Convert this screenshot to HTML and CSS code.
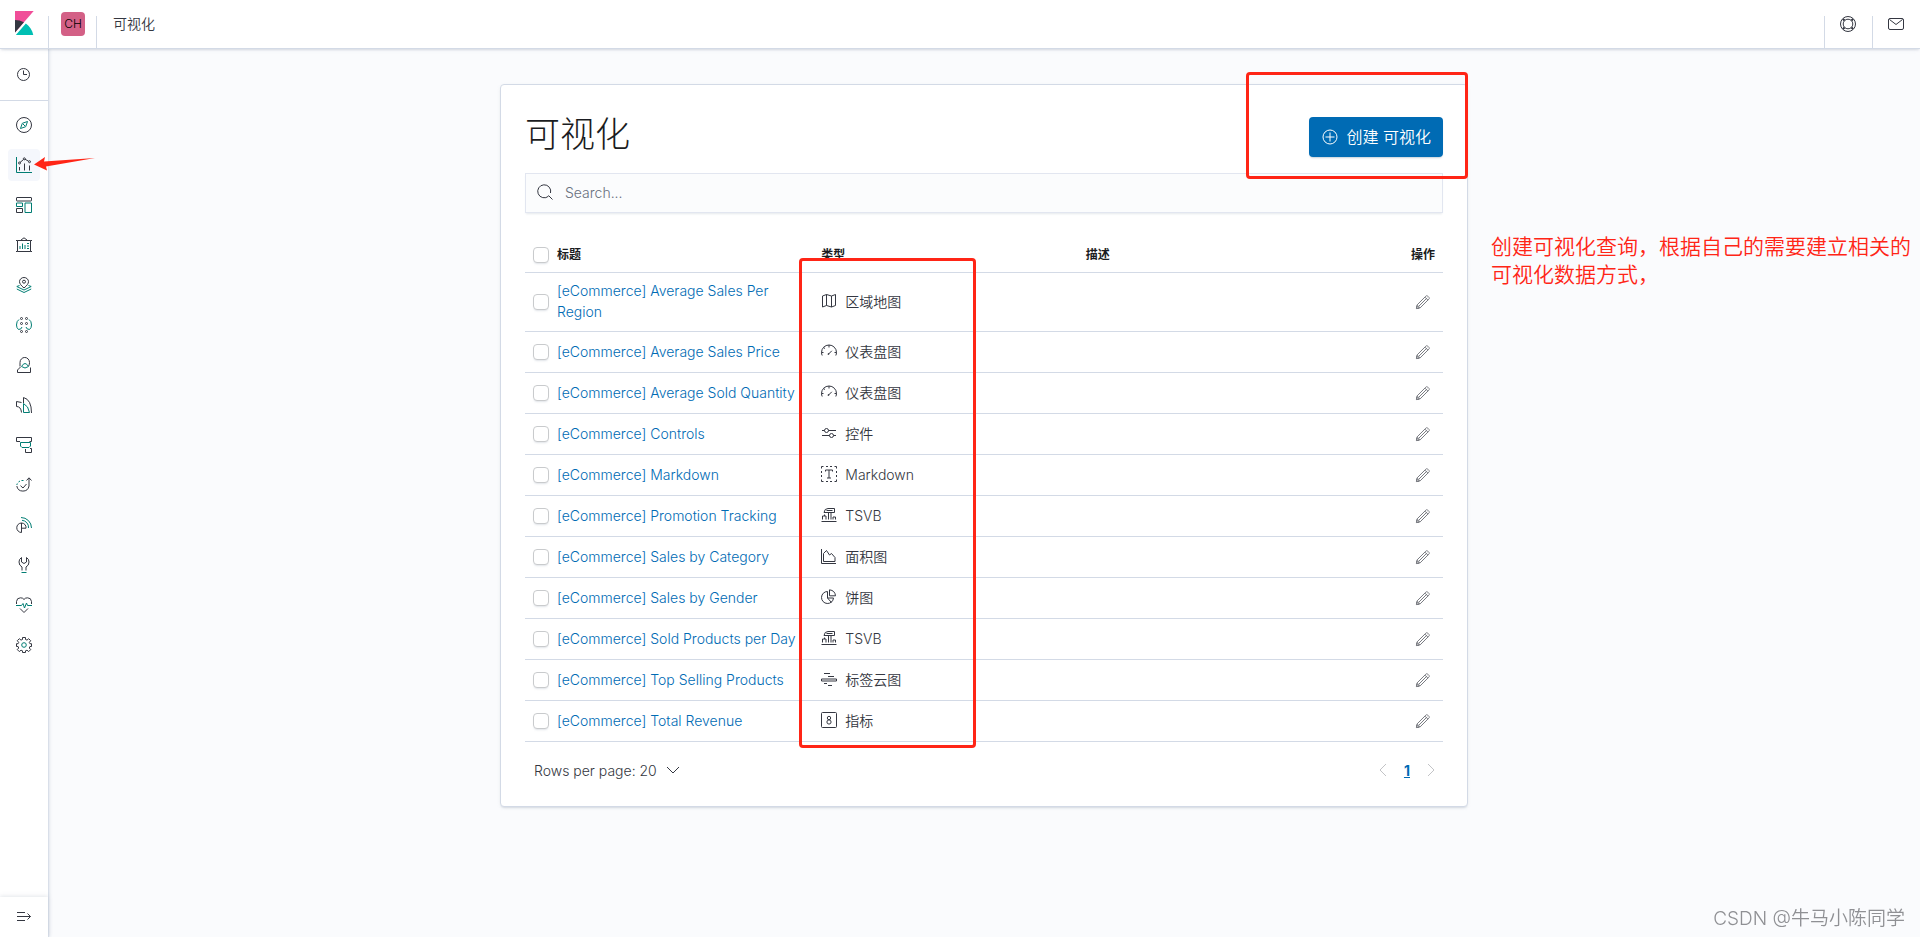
FILE: index.html
```html
<!DOCTYPE html>
<html lang="zh-CN">
<head>
<meta charset="utf-8">
<title>可视化 - Kibana</title>
<link rel="stylesheet" href="styles.css">
</head>
<body>
<svg class="sprite" aria-hidden="true">
  <symbol id="pencil" viewBox="0 0 16 16"><path d="M1.500 14.500l.6-3.600 8.700-8.700c.7-.7 1.300-.7 2 0l1 1c.7.7.7 1.300 0 2l-8.700 8.700zM4 12l8.200-8.200M2.200 11l2.800 2.800M9.900 3.100l3 3"/><path d="M1.400 14.600l.3-2.600 2.300 2.300z"/></symbol>
  <symbol id="gauge" viewBox="0 0 16 16"><path d="M1.200 12.500Q.5 11 .5 9.500A7.500 7.500 0 0 1 15.500 9.500Q15.500 11 14.800 12.500M.5 9.500h2M13.500 9.500h2M8 2v2.500M2.800 4.500l1.200 1.200M7.300 11.300l3.500-3.500"/><circle cx="7.500" cy="11" r=".5"/></symbol>
  <symbol id="tsvb" viewBox="0 0 16 16"><path d="M.5 14.500h15M1.500 12.500v-3.500h3.500v3.500M3.500 9V7.500M7.500 12.500V5.500M10 12.500V5.500M12 12.500v-2.500h2.500v2.500M3 5.500Q3.500 1.500 7 1.500h6.500v4zM5.500 3.500h6"/></symbol>
</svg>

<header class="topbar">
  <a class="logo" href="#" aria-label="Kibana"><svg width="24" height="24" viewBox="0 0 32 32"><path fill="#F04E98" d="M4 0v28.789L28.935.017z"/><path fill="#343741" d="M4 12v16.789l11.906-13.738A24.721 24.721 0 0 0 4 12"/><path fill="#00BFB3" d="M18.479 16.664L6.268 30.754l-1.073 1.237h23.191c-1.252-6.292-4.883-11.719-9.908-15.327"/></svg></a>
  <button class="slot space" type="button"><span class="avatar">CH</span></button>
  <nav class="crumbs" aria-label="breadcrumbs">可视化</nav>
  <button class="slot" type="button" aria-label="帮助"><svg class="ico" viewBox="0 0 16 16"><circle cx="8" cy="8" r="7.500"/><circle cx="8" cy="8" r="4.800"/><path stroke-width="2" d="M3 3l1.500 1.500M13 3l-1.500 1.500M3 13l1.500-1.500M13 13l-1.500-1.500"/></svg></button>
  <button class="slot" type="button" aria-label="邮件"><svg class="ico" viewBox="0 0 16 16"><rect x=".5" y="2.500" width="15" height="11" rx="1.500"/><path d="M1.500 3.500L8 8.500l6.500-5"/></svg></button>
</header>

<div class="shell">
  <nav class="side" aria-label="主导航">
    <div class="recent"><a href="#" aria-label="最近"><svg class="ico" viewBox="0 0 16 16"><circle cx="7.500" cy="8.500" r="6"/><path d="M7.500 4.500v4h3.500"/></svg></a></div>
    <div class="apps">
      <a href="#" aria-label="Discover"><svg class="ico" viewBox="0 0 16 16"><circle cx="8" cy="8" r="7.500"/><path class="teal" d="M11.500 4.500L9.700 9.700 4.500 11.500l1.800-5.200zM7 7l2 2"/></svg></a>
      <a href="#" class="active" aria-label="可视化"><svg class="ico" viewBox="0 0 16 16"><path class="teal" d="M.5 0v15.500H16"/><path d="M3.500 10v3.500M8.500 6.500v7M13.500 8.500v5M4 5.500l3.500-3M9 2.200l3.500 2"/><circle cx="3.500" cy="6" r="1"/><circle cx="8.300" cy="1.800" r="1"/><circle cx="13.500" cy="4.700" r="1"/></svg></a>
      <a href="#" aria-label="仪表板"><svg class="ico" viewBox="0 0 16 16"><rect x=".5" y=".5" width="15" height="3.500" rx=".5"/><path class="teal" d="M.5 6h6v3.500h-6zM9 6h6.500v9.500H9z"/><path d="M.5 11.500h6v4h-6z"/></svg></a>
      <a href="#" aria-label="Canvas"><svg class="ico" viewBox="0 0 16 16"><path d="M1.500 3.500h13v11h-13zM5 3L8 .8 11 3M0 3.500h1.500M14.500 3.500H16M0 14.500h1.500M14.500 14.500H16"/><path class="teal" d="M4 9v3M6.500 6.500V12M9 8v4M11 6.500h2M11 9h2M11 11.500h2"/></svg></a>
      <a href="#" aria-label="Maps"><svg class="ico" viewBox="0 0 16 16"><path d="M8 11C5 8.500 3.500 6.500 3.500 4.700a4.500 4.200 0 0 1 9 0C12.500 6.500 11 8.500 8 11z"/><circle cx="8" cy="4.700" r="1.500"/><path class="teal" d="M3.500 8.500L.8 9.500 8 13l7.200-3.500-2.700-1M.8 12L8 15.500l7.200-3.500"/></svg></a>
      <a href="#" aria-label="Machine Learning"><svg class="ico" viewBox="0 0 16 16"><circle cx="5.500" cy="1.500" r="1"/><circle cx="10.500" cy="1.500" r="1"/><circle cx="5.500" cy="6.500" r="1"/><circle cx="10.500" cy="6.500" r="1"/><circle cx="5.500" cy="14.500" r="1"/><circle cx="10.500" cy="14.500" r="1"/><path class="teal" d="M3 2.500Q.5 4 .5 8q0 3 2 4.500 3 0 3.500-2.500M13 2.500Q15.500 4 15.500 8q0 3-2 4.500-3 0-3.500-2.500"/></svg></a>
      <a href="#" aria-label="Metrics"><svg class="ico" viewBox="0 0 16 16"><path d="M4 9.500V5.500a4.700 5 0 0 1 9.500 0q0 2-.8 3.500M4.500 10L1.500 13v2.500h13V10.500"/><path class="teal" d="M5.500 9.500q3.500-6 7 0-3.500 3-7 0z"/></svg></a>
      <a href="#" aria-label="Logs"><svg class="ico" viewBox="0 0 16 16"><path d="M7.500 6V.500Q15.500 2.500 15.500 16M5.500 5.500L.5 4.500v5q4.500 0 5 6"/><path class="teal" d="M7.500 6.500v9h6Q12.500 9 7.500 6.500z"/></svg></a>
      <a href="#" aria-label="APM"><svg class="ico" viewBox="0 0 16 16"><path d="M4 4.500H.500v-4h15v4h-2M9.500 12v3.500h6V11.500H14"/><path class="teal" d="M4.500 5.500h10v3.500l-1.500 1.500H6L4.500 9z"/></svg></a>
      <a href="#" aria-label="Uptime"><svg class="ico" viewBox="0 0 16 16"><path d="M.8 9a6.200 6.200 0 0 0 12.200 0V1M10.500 3.500L13 .8 15.500 3.500M4.500 8.700L7 11l3.500-4"/><path class="teal" d="M.8 8l.5-1.500M2.500 5L4 4M5.500 3.500H7.500"/></svg></a>
      <a href="#" aria-label="SIEM"><svg class="ico" viewBox="0 0 16 16"><path d="M5.500 6v9.500A4.700 4.700 0 1 1 5.500 6a4.500 4.500 0 0 1 4.500 5.200H5.500"/><path class="teal" d="M5 .5a10.500 10.500 0 0 1 10.500 10.500M6 3.300A7 7 0 0 1 12.500 11"/></svg></a>
      <a href="#" aria-label="Dev Tools"><svg class="ico" viewBox="0 0 16 16"><path d="M6 13.500V10Q3 8.500 3 5q0-3 2.500-4.500V5L8 6.500 10.500 5V.500Q13 2 13 5q0 3.500-3 5v3.500"/><path class="teal" d="M5.500 15.500h5"/></svg></a>
      <a href="#" aria-label="监测"><svg class="ico" viewBox="0 0 16 16"><path d="M.5 7V4.500Q.8.800 4.500.800 7 .800 8 2.500 9 .800 11.500.800q3.700 0 4 3.700V7M4 11.500l4 4 4-4"/><path class="teal" d="M0 8.500h5.500L7 6.500 8.500 11l2-5 1 2.500H16"/></svg></a>
      <a href="#" aria-label="管理"><svg class="ico" viewBox="0 0 16 16"><path d="M6.500 2.500V.500h3v2l1.500.6 1.700-1.400 2 2-1.400 1.700.6 1.300h1.600v2.800h-1.600L13.300 11l1.400 1.600-2 2L11 13.200l-1.500.6v1.700h-3v-1.700L5 13.200l-1.700 1.400-2-2L2.700 11l-.6-1.500H.5V6.700h1.600l.6-1.300L1.300 3.700l2-2L5 3.100z"/><circle class="teal" cx="8" cy="8" r="2.300"/></svg></a>
    </div>
    <div class="expand"><button type="button" aria-label="展开"><svg class="ico" viewBox="0 0 16 16"><path d="M1 3.500h8M1 7.500h13.500M1 11.500h8M11.500 4.500l3 3-3 3"/></svg></button></div>
  </nav>

  <main class="main">
    <section class="panel">
      <div class="head">
        <h1>可视化</h1>
        <button class="create" type="button"><svg class="ico" viewBox="0 0 16 16"><circle cx="8" cy="8" r="7"/><path d="M8 3.500v9M3.500 8h9"/></svg>创建 可视化</button>
      </div>
      <label class="search"><svg class="ico" viewBox="0 0 16 16"><path d="M11.500 12.200A6.500 6.500 0 1 1 13.500 9M11.500 11.500l4 4"/></svg><input type="search" placeholder="Search..." aria-label="Search"></label>

      <table class="list">
        <colgroup><col class="c-check"><col><col><col><col class="c-act"></colgroup>
        <thead><tr><th><input type="checkbox" aria-label="全选"></th><th>标题</th><th>类型</th><th>描述</th><th class="act">操作</th></tr></thead>
        <tbody>
          <tr><td><input type="checkbox" aria-label="选择"></td><td><a href="#">[eCommerce] Average Sales Per Region</a></td><td><span class="type"><svg class="ico" viewBox="0 0 16 16"><path d="M1.500 3L5.500 1.500 10.500 3l4-1.500V12.500l-4 1.500-5-1.500-4 1.500zM5.500 1.500v11M10.500 3v11"/></svg>区域地图</span></td><td></td><td class="act"><button type="button" aria-label="编辑"><svg class="ico"><use href="#pencil"/></svg></button></td></tr>
          <tr><td><input type="checkbox" aria-label="选择"></td><td><a href="#">[eCommerce] Average Sales Price</a></td><td><span class="type"><svg class="ico"><use href="#gauge"/></svg>仪表盘图</span></td><td></td><td class="act"><button type="button" aria-label="编辑"><svg class="ico"><use href="#pencil"/></svg></button></td></tr>
          <tr><td><input type="checkbox" aria-label="选择"></td><td><a href="#">[eCommerce] Average Sold Quantity</a></td><td><span class="type"><svg class="ico"><use href="#gauge"/></svg>仪表盘图</span></td><td></td><td class="act"><button type="button" aria-label="编辑"><svg class="ico"><use href="#pencil"/></svg></button></td></tr>
          <tr><td><input type="checkbox" aria-label="选择"></td><td><a href="#">[eCommerce] Controls</a></td><td><span class="type"><svg class="ico" viewBox="0 0 16 16"><path d="M1 5.500h2.500M7.500 5.500H15M1 10.500h7.500M12.500 10.500H15"/><circle cx="5.500" cy="5.500" r="2"/><circle cx="10.500" cy="10.500" r="2"/></svg>控件</span></td><td></td><td class="act"><button type="button" aria-label="编辑"><svg class="ico"><use href="#pencil"/></svg></button></td></tr>
          <tr><td><input type="checkbox" aria-label="选择"></td><td><a href="#">[eCommerce] Markdown</a></td><td><span class="type"><svg class="ico" viewBox="0 0 16 16"><path d="M.5 2.500v-2h2M5 .5h2M9 .5h2M13.500.500h2v2M15.500 5v2M15.500 9v2M15.500 13.500v2h-2M11 15.500H9M7 15.500H5M2.500 15.500h-2v-2M.5 11V9M.5 7V5M4.500 5.500v-1.500h7v1.500M8 4v8M6 12h4"/></svg>Markdown</span></td><td></td><td class="act"><button type="button" aria-label="编辑"><svg class="ico"><use href="#pencil"/></svg></button></td></tr>
          <tr><td><input type="checkbox" aria-label="选择"></td><td><a href="#">[eCommerce] Promotion Tracking</a></td><td><span class="type"><svg class="ico"><use href="#tsvb"/></svg>TSVB</span></td><td></td><td class="act"><button type="button" aria-label="编辑"><svg class="ico"><use href="#pencil"/></svg></button></td></tr>
          <tr><td><input type="checkbox" aria-label="选择"></td><td><a href="#">[eCommerce] Sales by Category</a></td><td><span class="type"><svg class="ico" viewBox="0 0 16 16"><path d="M.5 1v14.500H15M2.500 13.500v-8l3-3 3 4.500 2-1.500 3.500 4v4z"/></svg>面积图</span></td><td></td><td class="act"><button type="button" aria-label="编辑"><svg class="ico"><use href="#pencil"/></svg></button></td></tr>
          <tr><td><input type="checkbox" aria-label="选择"></td><td><a href="#">[eCommerce] Sales by Gender</a></td><td><span class="type"><svg class="ico" viewBox="0 0 16 16"><path d="M6.500 2.500a6 6 0 1 0 6 6.500h-6zM6.500 9l4 4.500M8.500.8v6h6Q14 1.500 8.500.8z"/></svg>饼图</span></td><td></td><td class="act"><button type="button" aria-label="编辑"><svg class="ico"><use href="#pencil"/></svg></button></td></tr>
          <tr><td><input type="checkbox" aria-label="选择"></td><td><a href="#">[eCommerce] Sold Products per Day</a></td><td><span class="type"><svg class="ico"><use href="#tsvb"/></svg>TSVB</span></td><td></td><td class="act"><button type="button" aria-label="编辑"><svg class="ico"><use href="#pencil"/></svg></button></td></tr>
          <tr><td><input type="checkbox" aria-label="选择"></td><td><a href="#">[eCommerce] Top Selling Products</a></td><td><span class="type"><svg class="ico" viewBox="0 0 16 16"><path d="M3 2.500h6M7 5.500h6M.5 8h15v2H.500zM3 12.500h3M7 14.500h4"/></svg>标签云图</span></td><td></td><td class="act"><button type="button" aria-label="编辑"><svg class="ico"><use href="#pencil"/></svg></button></td></tr>
          <tr><td><input type="checkbox" aria-label="选择"></td><td><a href="#">[eCommerce] Total Revenue</a></td><td><span class="type"><svg class="ico" viewBox="0 0 16 16"><rect x=".5" y=".5" width="15" height="15" rx="1"/><circle cx="8" cy="6" r="1.700"/><circle cx="8" cy="10" r="2.100"/></svg>指标</span></td><td></td><td class="act"><button type="button" aria-label="编辑"><svg class="ico"><use href="#pencil"/></svg></button></td></tr>
        </tbody>
      </table>

      <div class="foot">
        <button class="rows" type="button">Rows per page: 20<svg class="ico" viewBox="0 0 16 16"><path d="M2 5l6 6 6-6"/></svg></button>
        <nav class="pager" aria-label="分页">
          <button type="button" disabled aria-label="上一页"><svg class="ico" viewBox="0 0 16 16"><path d="M11 2L5 8l6 6"/></svg></button>
          <a href="#" aria-current="page">1</a>
          <button type="button" disabled aria-label="下一页"><svg class="ico" viewBox="0 0 16 16"><path d="M5 2l6 6-6 6"/></svg></button>
        </nav>
      </div>
      <div class="mark mark-create"></div>
      <div class="mark mark-types"></div>
      <p class="note">创建可视化查询，根据自己的需要建立相关的可视化数据方式，</p>
    </section>
  </main>
</div>
<svg class="arrow" width="64" height="16" viewBox="0 0 64 16" aria-hidden="true"><path fill="#FF2516" d="M1 8.500L12 1l-1 4.500L62 2 13 10.500l1 4z"/></svg>
<div class="watermark">CSDN @牛马小陈同学</div>
</body>
</html>
```

FILE: styles.css
```css
* { box-sizing: border-box; }
body {
  margin: 0;
  min-height: 100vh;
  display: flex;
  flex-direction: column;
  background: #fafbfd;
  color: #343741;
  font: 14px/21px Inter, "Noto Sans CJK SC", sans-serif;
  font-weight: 350;
}
button {
  font: inherit;
  color: inherit;
  border: 0;
  padding: 0;
  background: none;
}
a { color: #006bb4; text-decoration: none; }
.sprite { display: none; }
.ico {
  width: 16px;
  height: 16px;
  flex: none;
  display: block;
  fill: none;
  stroke: #343741;
  stroke-width: 1;
}
.ico .teal { stroke: #017d73; }

.topbar {
  display: flex;
  height: 49px;
  background: #fff;
  border-bottom: 1px solid #d3dae6;
  box-shadow: 0 2px 2px -1px rgba(152, 162, 179, .3), 0 1px 5px -2px rgba(152, 162, 179, .3);
  z-index: 2;
  position: relative;
}
.logo { width: 48px; padding: 11px 12px; }
.logo svg { display: block; }
.slot {
  width: 48px;
  display: flex;
  justify-content: center;
  align-items: flex-start;
  padding-top: 16px;
  background: linear-gradient(#d3dae6, #d3dae6) 0 16px / 1px 100% no-repeat;
}
.slot.space { padding: 12px 0 0 2px; }
.avatar {
  width: 24px;
  height: 24px;
  border-radius: 4px;
  background: #d36086;
  color: #000;
  font-size: 12px;
  line-height: 24px;
}
.crumbs {
  flex: 1;
  padding: 13px 17px;
  background: linear-gradient(#d3dae6, #d3dae6) 0 16px / 1px 100% no-repeat;
}

.shell { flex: 1; display: flex; }
.side {
  width: 48px;
  background: #fff;
  display: flex;
  flex-direction: column;
  box-shadow: 1px 0 1px #d9dfe9, 2px 0 3px rgba(152, 162, 179, .2);
}
.recent { padding: 9px 8px 10px; border-bottom: 1px solid #d3dae6; }
.apps { flex: 1; display: flex; flex-direction: column; gap: 8px; padding: 8px; }
.recent a, .apps a, .expand button {
  width: 32px;
  height: 32px;
  display: flex;
  align-items: center;
  justify-content: center;
  border-radius: 4px;
}
.apps .active { background: #f5f7fc; }
.expand { padding: 4px 8px; box-shadow: 0 -1px 4px rgba(152, 162, 179, .25); }

.main { flex: 1; padding: 35px 16px; }
.panel {
  position: relative;
  max-width: 968px;
  margin: 0 auto;
  padding: 24px;
  background: #fff;
  border: 1px solid #d3dae6;
  border-radius: 4px;
  box-shadow: 0 2px 2px -1px rgba(152, 162, 179, .3), 0 1px 5px -2px rgba(152, 162, 179, .3);
}
.head {
  display: flex;
  align-items: center;
  justify-content: space-between;
  height: 56px;
  margin-bottom: 8px;
}
h1 {
  margin: 0;
  padding-bottom: 6px;
  color: #1a1c21;
  font-size: 35px;
  line-height: 40px;
  font-weight: 300;
}
.create {
  display: flex;
  align-items: center;
  gap: 8px;
  height: 40px;
  padding: 0 12px 0 13px;
  border-radius: 4px;
  background: #006bb4;
  color: #fff;
  font-size: 16px;
  box-shadow: 0 2px 2px -1px rgba(54, 97, 126, .3);
}
.create .ico { stroke: #fff; }
.search {
  display: flex;
  align-items: center;
  gap: 12px;
  height: 40px;
  padding: 0 11px 2px;
  background: #fbfcfd;
  border: 1px solid #e2e6f0;
  box-shadow: 0 2px 2px -1px rgba(152, 162, 179, .25);
}
.search input {
  flex: 1;
  border: 0;
  padding: 0;
  background: none;
  font: inherit;
  outline: 0;
}
.search input::placeholder { color: #69707d; }

.list {
  width: 100%;
  margin-top: 24px;
  table-layout: fixed;
  border-collapse: separate;
  border-spacing: 0;
}
.c-check { width: 24px; }
.c-act { width: 101px; }
.list th, .list td { padding: 8px; text-align: left; vertical-align: middle; border-bottom: 1px solid #d3dae6; }
.list th { height: 36px; padding: 0 8px; font-size: 12px; font-weight: 700; color: #1a1c21; }
.list td { height: 41px; }
.list th:first-child, .list td:first-child { padding-right: 0; }
.list td:nth-child(2), .list td:nth-child(3) { padding: 7px 8px 9px; }
.list input {
  appearance: none;
  display: block;
  width: 16px;
  height: 16px;
  margin: 0;
  border: 1px solid #c9cbcd;
  border-radius: 4px;
  background: #fff;
  box-shadow: 0 2px 2px -1px rgba(152, 162, 179, .3);
}
.type { display: flex; align-items: center; gap: 8px; }
.list .act { text-align: right; }
.act button { display: block; margin-left: auto; padding: 0 4px; }
.act .ico { stroke: #7a7c82; }

.foot {
  display: flex;
  justify-content: space-between;
  align-items: center;
  height: 24px;
  margin-top: 16px;
  padding: 0 4px 0 9px;
}
.rows { display: flex; align-items: center; gap: 8px; }
.pager { display: flex; align-items: center; gap: 13px; }
.pager .ico { stroke: #c2c3c6; }
.pager a { font-weight: 700; text-decoration: underline; }

.mark {
  position: absolute;
  border: 3px solid #ff2516;
  border-radius: 4px;
  pointer-events: none;
}
.mark-create { top: -13px; right: -1px; width: 222px; height: 107px; }
.mark-types { top: 173px; left: 298px; width: 177px; height: 490px; }
.note {
  position: absolute;
  top: 148px;
  left: 990px;
  width: 424px;
  margin: 0;
  color: #ff2516;
  font-size: 21px;
  line-height: 28px;
}
.arrow { position: absolute; left: 33px; top: 156px; z-index: 3; }
.watermark {
  position: fixed;
  right: 15px;
  bottom: 4px;
  color: #8f9094;
  font-size: 19px;
  line-height: 28px;
}
```
